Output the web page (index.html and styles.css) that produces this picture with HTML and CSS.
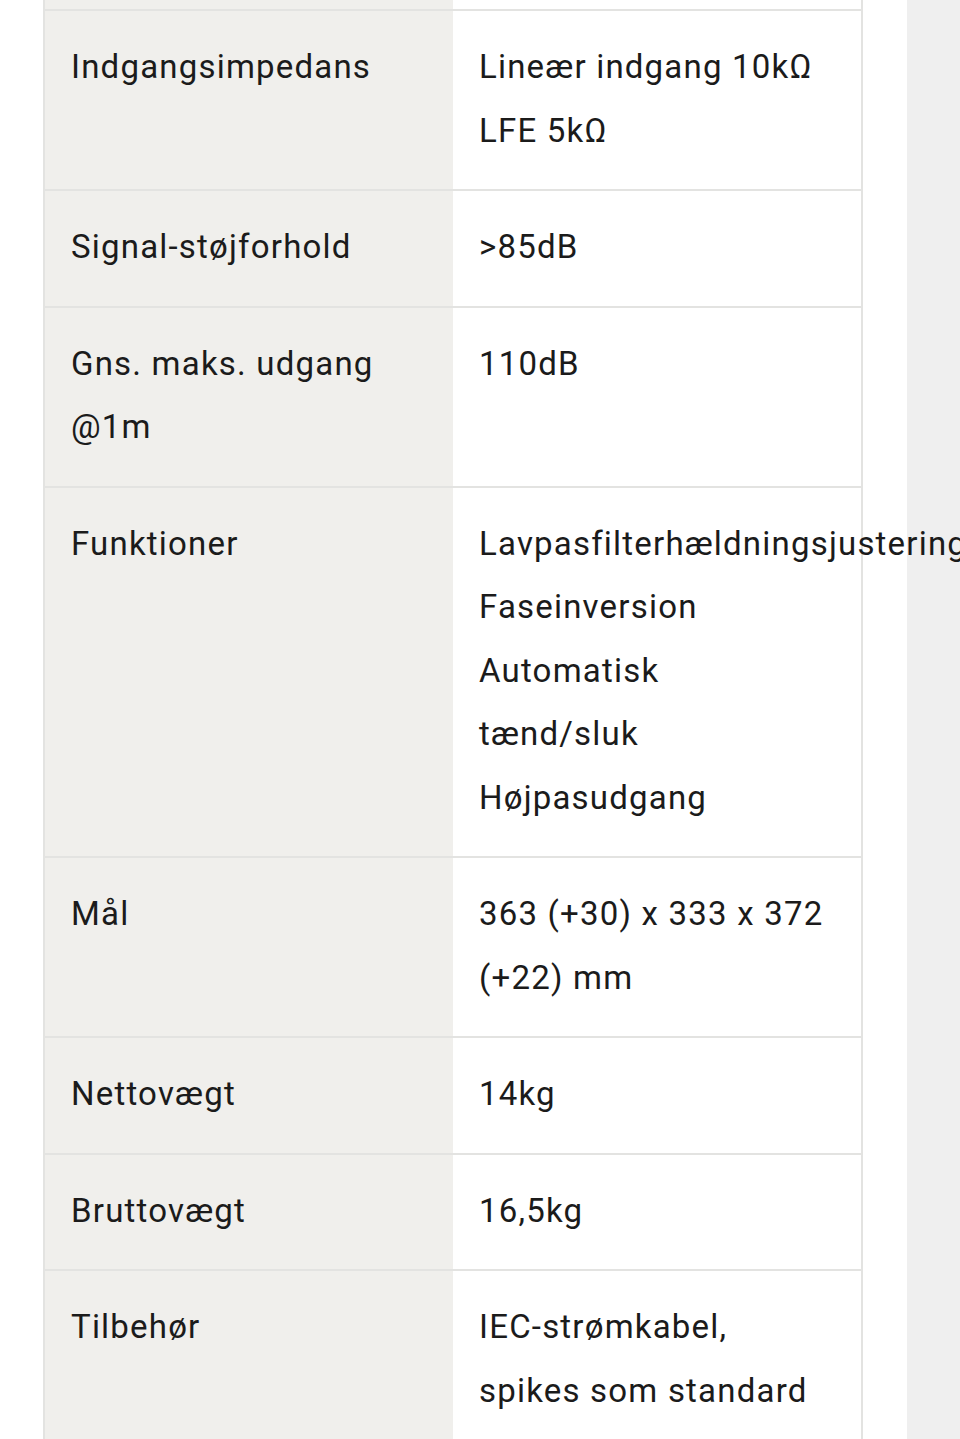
FILE: index.html
```html
<!DOCTYPE html>
<html lang="da">
<head>
<meta charset="utf-8">
<title>Specifikationer</title>
<link rel="stylesheet" href="styles.css">
</head>
<body>
<div class="page">
  <div class="spec">
    <div class="row row-cut"><div class="key"></div><div class="val"></div></div>
    <div class="row"><div class="key">Indgangsimpedans</div><div class="val">Lineær indgang 10kΩ<br>LFE 5kΩ</div></div>
    <div class="row"><div class="key">Signal-støjforhold</div><div class="val">&gt;85dB</div></div>
    <div class="row"><div class="key">Gns. maks. udgang @1m</div><div class="val">110dB</div></div>
    <div class="row"><div class="key">Funktioner</div><div class="val">Lavpasfilterhældningsjustering<br>Faseinversion<br>Automatisk<br>tænd/sluk<br>Højpasudgang</div></div>
    <div class="row"><div class="key">Mål</div><div class="val">363 (+30) x 333 x 372 (+22) mm</div></div>
    <div class="row"><div class="key">Nettovægt</div><div class="val">14kg</div></div>
    <div class="row"><div class="key">Bruttovægt</div><div class="val">16,5kg</div></div>
    <div class="row row-last"><div class="key">Tilbehør</div><div class="val">IEC-strømkabel, spikes som standard</div></div>
  </div>
  <div class="side"></div>
</div>
</body>
</html>
```

FILE: styles.css
```css
html, body {
  margin: 0;
  padding: 0;
  background: #ffffff;
}

body {
  font-family: Roboto, "Noto Sans", sans-serif;
  color: #1b1b1b;
  overflow: hidden;
}

.page {
  display: flex;
  height: 1439px;
  padding-left: 43px;
  overflow: hidden;
}

.spec {
  width: 816px;
  flex: none;
  display: flex;
  flex-direction: column;
  border-left: 2px solid #e3e3e1;
  border-right: 2px solid #e3e3e1;
}

.row {
  display: grid;
  grid-template-columns: 408px 408px;
  border-top: 2px solid #e3e3e1;
  flex: none;
}

.row-cut {
  border-top: none;
  height: 9px;
}

.row-last {
  flex: 1 0 auto;
}

.key,
.val {
  padding: 24px 26px 27px 26px;
  font-size: 33px;
  line-height: 63.5px;
  letter-spacing: 1.2px;
  font-weight: 400;
}

.row-cut .key,
.row-cut .val {
  padding: 0;
}

.key {
  background: #f0efec;
}

.val {
  background: #ffffff;
  position: relative;
  z-index: 1;
}

.side {
  flex: none;
  width: 53px;
  margin-left: 44px;
  background: #efefef;
}
```
